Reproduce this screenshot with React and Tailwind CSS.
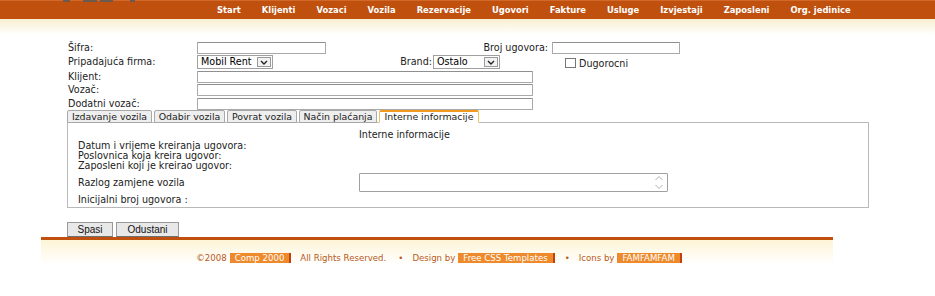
import React from "react";

const navItems = [
  "Start",
  "Klijenti",
  "Vozaci",
  "Vozila",
  "Rezervacije",
  "Ugovori",
  "Fakture",
  "Usluge",
  "Izvjestaji",
  "Zaposleni",
  "Org. jedinice",
];

const tabs = [
  { label: "Izdavanje vozila", w: "w-[85px]" },
  { label: "Odabir vozila", w: "w-[71px]" },
  { label: "Povrat vozila", w: "w-[70px]" },
  { label: "Način plaćanja", w: "w-[78px]" },
  { label: "Interne informacije", w: "w-[100px]", active: true },
];

const Input = ({ className = "" }) => (
  <div
    className={`h-[12px] border border-[#a9a9a9] border-t-[#8f8f8f] bg-white rounded-[1px] ${className}`}
  ></div>
);

const Select = ({ value, className = "" }) => (
  <div
    className={`h-[14px] flex items-center border border-[#a0a0a0] bg-white pl-[3px] pr-[1px] ${className}`}
  >
    <span className="flex-1 text-[9.6px] leading-none text-black">{value}</span>
    <span className="h-[10px] w-[14px] border border-[#9a9a9a] bg-[#f2f2f2] flex items-center justify-center">
      <svg width="8" height="5" viewBox="0 0 8 5">
        <path d="M1 1 L4 4 L7 1" fill="none" stroke="#222" strokeWidth="1.4" />
      </svg>
    </span>
  </div>
);

const Highlight = ({ children }) => (
  <span className="bg-[#ee8a2c] text-white px-[5px] border-r-2 border-[#c2410c] leading-[10px] inline-block">
    {children}
  </span>
);

export default function App() {
  return (
    <div className="w-[935px] h-[296px] bg-white overflow-hidden font-['DejaVu_Sans',sans-serif] text-[#222]">
      {/* header bar */}
      <div className="relative h-[19px] bg-[#c0500e] border-t border-[#d2682a] flex items-center pl-[217px] gap-[21px]">
        <svg className="absolute left-[60px] top-[-1px]" width="80" height="4" viewBox="0 0 80 4">
          <rect x="3" y="0" width="7" height="2" fill="#6b5a50" />
          <rect x="23" y="0" width="14" height="2" fill="#6b5a50" />
          <rect x="40" y="0" width="13" height="2" fill="#6b5a50" />
          <rect x="70" y="0" width="5" height="2" fill="#6b5a50" />
        </svg>
        {navItems.map((item) => (
          <span key={item} className="text-white font-bold text-[8.4px] leading-none">
            {item}
          </span>
        ))}
      </div>
      <div className="h-[16px] bg-gradient-to-b from-[#f8eed0] to-white"></div>

      {/* form */}
      <div className="pl-[68px] pt-[6px] text-[9.6px] leading-none">
        <div className="flex items-center h-[13px]">
          <span className="w-[129px]">Šifra:</span>
          <Input className="w-[129px]" />
          <span className="w-[222px] text-right">Broj ugovora:</span>
          <Input className="w-[128px] ml-[4px]" />
        </div>
        <div className="flex items-center h-[14px] mt-[1px]">
          <span className="w-[129px]">Pripadajuća firma:</span>
          <Select value="Mobil Rent" className="w-[76px]" />
          <span className="w-[159px] text-right">Brand:</span>
          <Select value="Ostalo" className="w-[67px] ml-[1px]" />
          <span className="ml-[65px] mt-[1px] w-[11px] h-[10px] border border-[#777] bg-white"></span>
          <span className="ml-[3px] mt-[3px]">Dugorocni</span>
        </div>
        <div className="flex items-center h-[13px] mt-[1px]">
          <span className="w-[129px]">Klijent:</span>
          <Input className="w-[336px]" />
        </div>
        <div className="flex items-center h-[13px]">
          <span className="w-[129px]">Vozač:</span>
          <Input className="w-[336px]" />
        </div>
        <div className="flex items-center h-[13px] mt-[1px]">
          <span className="w-[129px]">Dodatni vozač:</span>
          <Input className="w-[336px]" />
        </div>
      </div>

      {/* tabs */}
      <div className="ml-[67px] w-[802px]">
        <div className="flex gap-[2px] h-[13px] relative z-10">
          {tabs.map((t) => (
            <div
              key={t.label}
              className={`${t.w} h-[13px] flex items-center justify-center text-[9.4px] leading-none border rounded-t-[2px] whitespace-nowrap ${
                t.active
                  ? "bg-white border-[#f0c060] border-t-2 border-t-[#f09a20] border-b-white"
                  : "bg-[#eeeeee] border-[#a8a8a8]"
              }`}
            >
              {t.label}
            </div>
          ))}
        </div>
        <div className="h-[86px] border border-[#b8b8b8] -mt-px pl-[10px] text-[9.6px] leading-none">
          <div className="pl-[281px] pt-[7px] h-[18px]">Interne informacije</div>
          <div className="h-[10px] flex items-center">Datum i vrijeme kreiranja ugovora:</div>
          <div className="h-[10px] flex items-center">Poslovnica koja kreira ugovor:</div>
          <div className="h-[10px] flex items-center">Zaposleni koji je kreirao ugovor:</div>
          <div className="flex items-center h-[21px] mt-[1px]">
            <span className="w-[281px]">Razlog zamjene vozila</span>
            <div className="w-[309px] h-[19px] border border-[#a0a0a0] bg-white rounded-[1px] flex justify-end pr-[3px]">
              <svg width="10" height="17" viewBox="0 0 10 17">
                <path d="M1.5 6 L5 2.5 L8.5 6" fill="none" stroke="#b0b0b0" strokeWidth="1" />
                <path d="M1.5 11 L5 14.5 L8.5 11" fill="none" stroke="#b0b0b0" strokeWidth="1" />
              </svg>
            </div>
          </div>
          <div className="h-[12px] flex items-center mt-[1px]">Inicijalni broj ugovora :</div>
        </div>
      </div>

      {/* buttons */}
      <div className="ml-[67px] mt-[14px] flex gap-[3px] font-['Liberation_Sans',sans-serif] text-[10px] leading-none">
        <button className="w-[46px] h-[15px] bg-[#e8e8e8] border border-[#9a9a9a] border-b-[#707070] text-[#111]">
          Spasi
        </button>
        <button className="w-[63px] h-[15px] bg-[#e8e8e8] border border-[#9a9a9a] border-b-[#707070] text-[#111]">
          Odustani
        </button>
      </div>

      {/* footer */}
      <div className="ml-[41px] w-[792px]">
        <div className="h-[3px] bg-[#c0500e]"></div>
        <div className="h-[24px] bg-gradient-to-b from-[#fdf4d6] to-white flex items-end justify-center pl-[4px] pb-[1px]">
          <div className="flex items-center text-[8.6px] leading-none text-[#b85a1c] whitespace-nowrap">
            <span>©2008</span>
            <span className="ml-[3px]">
              <Highlight>Comp 2000</Highlight>
            </span>
            <span className="ml-[9px]">All Rights Reserved.</span>
            <span className="ml-[12px]">•</span>
            <span className="ml-[9px]">Design by</span>
            <span className="ml-[3px]">
              <Highlight>Free CSS Templates</Highlight>
            </span>
            <span className="ml-[10px]">•</span>
            <span className="ml-[9px]">Icons by</span>
            <span className="ml-[3px]">
              <Highlight>FAMFAMFAM</Highlight>
            </span>
          </div>
        </div>
      </div>
    </div>
  );
}
